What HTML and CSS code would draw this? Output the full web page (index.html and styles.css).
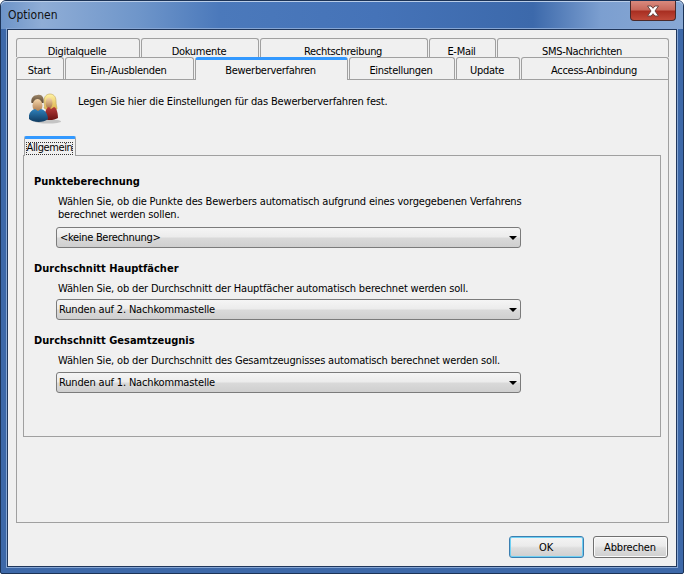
FILE: index.html
```html
<!DOCTYPE html>
<html><head><title>Optionen</title>
<meta charset="utf-8">
<link rel="stylesheet" href="styles.css">
</head>
<body>
<div id="window">
	<div id="titlebar">
		<span class="title">Optionen</span>
		<div class="closebtn">
			<svg width="14" height="12" viewBox="0 0 14 12">
				<path d="M1.5 1h3.6L7 3.3 8.900 1h3.600L9 6l3.500 5H8.900L7 8.700 5.100 11H1.500L5 6z" fill="#fff" stroke="#6b4440" stroke-width="1"/>
			</svg>
		</div>
	</div>
	<div id="client">
		<div class="tabrow toprow">
			<div class="tab w-digital">Digitalquelle</div>
			<div class="tab w-dok">Dokumente</div>
			<div class="tab w-recht">Rechtschreibung</div>
			<div class="tab w-mail">E-Mail</div>
			<div class="tab w-sms">SMS-Nachrichten</div>
		</div>
		<div class="tabrow bottomrow">
			<div class="tab w-start">Start</div>
			<div class="tab w-ein">Ein-/Ausblenden</div>
			<div class="tab active w-bew">Bewerberverfahren</div>
			<div class="tab w-einst">Einstellungen</div>
			<div class="tab w-upd">Update</div>
			<div class="tab w-acc">Access-Anbindung</div>
		</div>
		<div id="panel">
			<div class="intro">
				<svg class="people" width="34" height="32" viewBox="0 0 34 32">
					<defs>
						<linearGradient id="skin" x1="0" y1="0" x2="0" y2="1"><stop offset="0" stop-color="#f8d8ac"/><stop offset="1" stop-color="#a87548"/></linearGradient>
						<linearGradient id="blue" x1="0" y1="0" x2="0" y2="1"><stop offset="0" stop-color="#2f82bd"/><stop offset="1" stop-color="#103a60"/></linearGradient>
						<linearGradient id="red" x1="0" y1="0" x2="0" y2="1"><stop offset="0" stop-color="#b83c3c"/><stop offset="1" stop-color="#6a1212"/></linearGradient>
						<linearGradient id="blond" x1="0" y1="0" x2="0" y2="1"><stop offset="0" stop-color="#fff3a4"/><stop offset="1" stop-color="#dcb04a"/></linearGradient>
						<linearGradient id="hair" x1="0" y1="0" x2="0" y2="1"><stop offset="0" stop-color="#9c8568"/><stop offset="1" stop-color="#5d4a36"/></linearGradient>
					</defs>
					<ellipse cx="19" cy="28.500" rx="13" ry="2" fill="#c4c4c4"/>
					<path d="M15 8c0-5 3-7 6-7s6 2 6 7c0 4 1 6 1 8l-4 1h-6l-3-2c1-2 0-4 0-7z" fill="url(#blond)" stroke="#bfa257" stroke-width=".6"/>
					<ellipse cx="20" cy="10" rx="3.500" ry="5.500" fill="url(#skin)"/>
					<path d="M16 26c-1-6 1-11 4-12l2 2 3-2c3 1 4 7 4 11-3 2-10 3-13 1z" fill="url(#red)"/>
					<path d="M2.500 10c-1-5 2-8 6-8 4-1 7 2 6 8z" fill="url(#hair)"/>
					<ellipse cx="8.500" cy="12.500" rx="5" ry="6.500" fill="url(#skin)"/>
					<path d="M0 26c-1-5 2-9 6-10l3 2 3-2c4 1 7 5 7 10-4 4-15 4-19 0z" fill="url(#blue)"/>
				</svg>
				<span>Legen Sie hier die Einstellungen für das Bewerberverfahren fest.</span>
			</div>
			<div class="subtabs">
				<div class="subtab"><span class="focus">Allgemein</span></div>
			</div>
			<div id="subpanel">
				<div class="group first">
					<h4>Punkteberechnung</h4>
					<p>Wählen Sie, ob die Punkte des Bewerbers automatisch aufgrund eines vorgegebenen Verfahrens<br>berechnet werden sollen.</p>
					<div class="combo"><span class="keine">&lt;keine Berechnung&gt;</span><i class="arrow"></i></div>
				</div>
				<div class="group">
					<h4>Durchschnitt Hauptfächer</h4>
					<p>Wählen Sie, ob der Durchschnitt der Hauptfächer automatisch berechnet werden soll.</p>
					<div class="combo"><span>Runden auf 2. Nachkommastelle</span><i class="arrow"></i></div>
				</div>
				<div class="group last">
					<h4>Durchschnitt Gesamtzeugnis</h4>
					<p>Wählen Sie, ob der Durchschnitt des Gesamtzeugnisses automatisch berechnet werden soll.</p>
					<div class="combo"><span>Runden auf 1. Nachkommastelle</span><i class="arrow"></i></div>
				</div>
			</div>
		</div>
		<div id="buttons">
			<div class="btn default">OK</div>
			<div class="btn">Abbrechen</div>
		</div>
	</div>
</div>
</body></html>
```

FILE: styles.css
```css
* { box-sizing: border-box; }
html, body { margin: 0; padding: 0; }
body {
	width: 684px;
	height: 574px;
	overflow: hidden;
	background: #fff;
	font-family: "DejaVu Sans", sans-serif;
	font-stretch: condensed;
	font-size: 11px;
	letter-spacing: -0.17px;
	color: #000;
}
#window {
	width: 684px;
	height: 574px;
	display: flex;
	flex-direction: column;
	padding: 0 6px 7px 6px;
	border: 1px solid #1c3356;
	border-radius: 6px 6px 2px 2px;
	background: #3d68a8;
}
#titlebar {
	height: 28px;
	display: flex;
	justify-content: space-between;
	margin: 0 -6px;
	padding: 0 7px;
	background: linear-gradient(90deg, #6d94c8 0%, #8fadd6 6%, #6f96ca 20%, #4b79bb 32%, #4573b8 55%, #3c69ab 78%, #7c9fd0 88%, #88a8d4 100%);
	border-radius: 5px 5px 0 0;
	box-shadow: inset 0 1px 0 #b9cde8;
}
.title {
	font-size: 12px;
	letter-spacing: 0;
	line-height: 29px;
	color: #111;
}
.closebtn {
	width: 46px;
	height: 20px;
	display: flex;
	align-items: center;
	justify-content: center;
	border: 1px solid #4a2a2a;
	border-top: 0;
	border-radius: 0 0 4px 4px;
	background: linear-gradient(#d98a7e 0%, #c8695c 45%, #a92f22 55%, #c04a3a 100%);
}
#client {
	flex: 1;
	display: flex;
	flex-direction: column;
	background: #f0f0f0;
	border: 1px solid #20375c;
	box-shadow: 0 0 0 1px #86a6d4;
	padding: 8px 7px 8px 8px;
}

/* tabs */
.tabrow { display: flex; gap: 1px; }
.tab {
	border: 1px solid #a0a0a0;
	border-bottom: 0;
	border-radius: 3px 3px 0 0;
	padding-right: 2px;
	text-align: center;
	letter-spacing: -0.3px;
	background: #f0f0f0;
}
.toprow .tab { height: 19px; line-height: 25px; }
.bottomrow .tab { height: 22px; line-height: 25px; }
.bottomrow .tab.active {
	border: 0;
	border-top: 3px solid #3399ff;
	border-left: 1px solid #a0a0a0;
	border-right: 1px solid #a0a0a0;
	height: 23px;
	margin-bottom: -1px;
	line-height: 22px;
	position: relative;
}
.w-digital { width: 124px; }
.w-dok { width: 118px; }
.w-recht { width: 168px; }
.w-mail { width: 67px; }
.w-sms { width: 172px; }
.w-start { width: 48px; }
.w-ein { width: 129px; }
.w-bew { width: 153px; }
.w-einst { width: 106px; }
.w-upd { width: 64px; }
.w-acc { width: 148px; }

#panel {
	height: 444px;
	border: 1px solid #a0a0a0;
	padding: 0 7px 0 6px;
}
.intro {
	display: flex;
	align-items: flex-start;
	height: 56px;
	padding: 13px 0 0 6px;
}
.intro span { margin: 2px 0 0 15px; }
.people { flex: none; }

.subtabs { display: flex; height: 19px; }
.subtab {
	width: 52px;
	height: 20px;
	margin-left: 1px;
	border: 1px solid #a0a0a0;
	border-top: 3px solid #3399ff;
	border-bottom: 0;
	border-radius: 2px 2px 0 0;
	background: #f0f0f0;
	position: relative;
	padding: 3px 0 0 1px;
}
.focus {
	display: block;
	width: 47px;
	height: 13px;
	line-height: 12px;
	letter-spacing: -0.4px;
	outline: 1px dotted #333;
	outline-offset: -1px;
	text-align: center;
}
#subpanel {
	height: 282px;
	border: 1px solid #a0a0a0;
	padding: 0 10px;
}
.group { margin-top: 13px; }
.group.first { margin-top: 18px; }
h4 {
	margin: 0;
	font-size: 11px;
	font-weight: 700;
	letter-spacing: 0;
	line-height: 15px;
}
.group p {
	margin: 6px 0 4px 24px;
	line-height: 13px;
}
.group.first p { margin-bottom: 6px; }
.group.last p { margin-bottom: 5px; }
.combo {
	width: 465px;
	height: 21px;
	margin-left: 22px;
	display: flex;
	justify-content: space-between;
	align-items: center;
	padding: 0 3px 0 2px;
	border: 1px solid #7b7b7b;
	border-radius: 3px;
	background: linear-gradient(#f5f5f5 0%, #ececec 45%, #d9d9d9 55%, #cfcfcf 100%);
}
.combo .keine { padding-left: 1px; letter-spacing: -0.3px; }
.arrow {
	width: 0;
	height: 0;
	border-left: 4px solid transparent;
	border-right: 4px solid transparent;
	border-top: 4px solid #000;
}

#buttons {
	display: flex;
	justify-content: flex-end;
	gap: 9px;
	margin-top: 13px;
	padding-right: 1px;
}
.btn {
	width: 75px;
	height: 22px;
	padding-right: 1px;
	line-height: 21px;
	text-align: center;
	border: 1px solid #707070;
	border-radius: 3px;
	background: linear-gradient(#f4f4f4 0%, #ebebeb 45%, #dddddd 55%, #cfcfcf 100%);
	box-shadow: inset 0 0 0 1px #fbfbfb;
}
.btn.default {
	border-color: #3c7fb1;
	box-shadow: inset 0 0 0 1px #6fd0f3;
}
```
